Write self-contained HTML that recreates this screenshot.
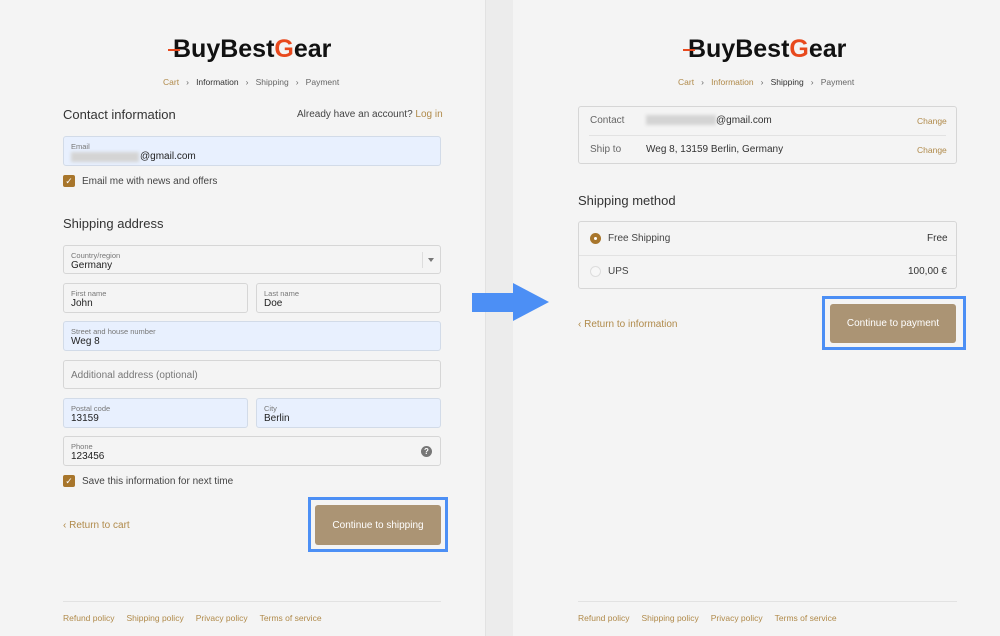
<!DOCTYPE html>
<html><head><meta charset="utf-8"><style>
*{margin:0;padding:0;box-sizing:border-box}
body{width:1000px;height:636px;position:relative;background:#f4f4f4;font-family:"Liberation Sans",sans-serif;color:#333;overflow:hidden}
.a{position:absolute}
.strip{left:485px;top:0;width:28px;height:636px;background:#ececec;border-left:1px solid #e2e2e2}
.logo{font-weight:bold;font-size:25px;letter-spacing:0;color:#111;white-space:nowrap}
.logo span{color:#e8491d}
.crumb{font-size:8.5px;color:#666;white-space:nowrap}
.crumb .g{color:#b08a4a}
.h{font-size:13px;color:#333}
.f{border:1px solid #d6d6d6;border-radius:3px;background:#f4f4f4}
.f.b{background:#e8f0fe;border-color:#d2dbe8}
.lab{position:absolute;left:7px;top:5px;font-size:7.5px;color:#777}
.val{position:absolute;left:7px;top:14px;font-size:10px;color:#222}
.ph{position:absolute;left:7px;top:9px;font-size:10px;color:#777}
.cb{width:12px;height:12px;background:#a8762c;border-radius:2px;color:#fff;font-size:9px;line-height:12px;text-align:center}
.t{font-size:10px;color:#444;white-space:nowrap}
.gold{color:#b08a4a}
.btn{background:#ab9474;border-radius:3px;color:#fff;font-size:10px;display:flex;align-items:center;justify-content:center}
.frame{border:3px solid #4c8ff5}
.foot{font-size:8.5px;color:#b08a4a;white-space:nowrap}
.foot b{font-weight:normal;margin-right:12px}
.line{height:1px;background:#e2e2e2}
.blur{background:#d4d4d4;filter:blur(1.5px)}
</style></head><body>
<div class="a strip"></div>

<!-- LEFT -->
<div class="a logo" style="left:173px;top:35px">BuyBest<span>G</span>ear</div>
<div class="a" style="left:168px;top:49px;width:12px;height:2px;background:#e8491d"></div>
<div class="a crumb" style="left:163px;top:77px"><span class="g">Cart</span> &nbsp;&nbsp;›&nbsp;&nbsp; <span style="color:#333">Information</span> &nbsp;&nbsp;›&nbsp;&nbsp; Shipping &nbsp;&nbsp;›&nbsp;&nbsp; Payment</div>

<div class="a h" style="left:63px;top:107px">Contact information</div>
<div class="a t" style="left:297px;top:109px">Already have an account? <span class="gold">Log in</span></div>
<div class="a f b" style="left:63px;top:136px;width:378px;height:30px"><div class="lab">Email</div><div class="a blur" style="left:7px;top:15px;width:68px;height:10px"></div><div class="val" style="left:76px">@gmail.com</div></div>
<div class="a cb" style="left:63px;top:175px">✓</div>
<div class="a t" style="left:82px;top:176px">Email me with news and offers</div>

<div class="a h" style="left:63px;top:216px">Shipping address</div>
<div class="a f" style="left:63px;top:245px;width:378px;height:29px"><div class="lab">Country/region</div><div class="val">Germany</div><div class="a" style="left:358px;top:6px;width:1px;height:16px;background:#ddd"></div><div class="a" style="left:364px;top:12px;width:0;height:0;border-left:3.5px solid transparent;border-right:3.5px solid transparent;border-top:4px solid #777"></div></div>
<div class="a f" style="left:63px;top:283px;width:185px;height:30px"><div class="lab">First name</div><div class="val">John</div></div>
<div class="a f" style="left:256px;top:283px;width:185px;height:30px"><div class="lab">Last name</div><div class="val">Doe</div></div>
<div class="a f b" style="left:63px;top:321px;width:378px;height:30px"><div class="lab">Street and house number</div><div class="val">Weg 8</div></div>
<div class="a f" style="left:63px;top:360px;width:378px;height:29px"><div class="ph">Additional address (optional)</div></div>
<div class="a f b" style="left:63px;top:398px;width:185px;height:30px"><div class="lab">Postal code</div><div class="val">13159</div></div>
<div class="a f b" style="left:256px;top:398px;width:185px;height:30px"><div class="lab">City</div><div class="val">Berlin</div></div>
<div class="a f" style="left:63px;top:436px;width:378px;height:30px"><div class="lab">Phone</div><div class="val">123456</div><div class="a" style="left:357px;top:9px;width:11px;height:11px;border-radius:50%;background:#777;color:#fff;font-size:8px;font-weight:bold;text-align:center;line-height:11px">?</div></div>
<div class="a cb" style="left:63px;top:475px">✓</div>
<div class="a t" style="left:82px;top:476px">Save this information for next time</div>

<div class="a t gold" style="left:63px;top:520px">‹ Return to cart</div>
<div class="a frame" style="left:308px;top:497px;width:140px;height:55px"></div>
<div class="a btn" style="left:315px;top:505px;width:126px;height:40px">Continue to shipping</div>

<div class="a line" style="left:63px;top:601px;width:378px"></div>
<div class="a foot" style="left:63px;top:613px"><b>Refund policy</b><b>Shipping policy</b><b>Privacy policy</b><b>Terms of service</b></div>

<!-- ARROW -->
<div class="a" style="left:472px;top:293px;width:42px;height:19px;background:#4c8ff5"></div>
<div class="a" style="left:513px;top:283px;width:0;height:0;border-top:19.5px solid transparent;border-bottom:19.5px solid transparent;border-left:36px solid #4c8ff5"></div>

<!-- RIGHT -->
<div class="a logo" style="left:688px;top:35px">BuyBest<span>G</span>ear</div>
<div class="a" style="left:683px;top:49px;width:12px;height:2px;background:#e8491d"></div>
<div class="a crumb" style="left:678px;top:77px"><span class="g">Cart</span> &nbsp;&nbsp;›&nbsp;&nbsp; <span class="g">Information</span> &nbsp;&nbsp;›&nbsp;&nbsp; <span style="color:#333">Shipping</span> &nbsp;&nbsp;›&nbsp;&nbsp; Payment</div>

<div class="a f" style="left:578px;top:106px;width:379px;height:58px"></div>
<div class="a line" style="left:589px;top:135px;width:357px"></div>
<div class="a t" style="left:590px;top:115px;color:#666">Contact</div>
<div class="a blur" style="left:646px;top:115px;width:70px;height:10px"></div>
<div class="a t" style="left:716px;top:115px;color:#333">@gmail.com</div>
<div class="a foot" style="left:917px;top:116px">Change</div>
<div class="a t" style="left:590px;top:144px;color:#666">Ship to</div>
<div class="a t" style="left:646px;top:144px;color:#333">Weg 8, 13159 Berlin, Germany</div>
<div class="a foot" style="left:917px;top:145px">Change</div>

<div class="a h" style="left:578px;top:193px">Shipping method</div>
<div class="a f" style="left:578px;top:221px;width:379px;height:68px"></div>
<div class="a line" style="left:579px;top:255px;width:377px"></div>
<div class="a" style="left:590px;top:233px;width:11px;height:11px;border-radius:50%;background:#a8762c"><div class="a" style="left:4px;top:4px;width:3px;height:3px;border-radius:50%;background:#fff"></div></div>
<div class="a t" style="left:608px;top:233px">Free Shipping</div>
<div class="a t" style="left:927px;top:233px;color:#333">Free</div>
<div class="a" style="left:590px;top:266px;width:11px;height:11px;border-radius:50%;border:1px solid #ddd;background:#f7f7f7"></div>
<div class="a t" style="left:608px;top:266px">UPS</div>
<div class="a t" style="left:908px;top:266px;color:#333">100,00 €</div>

<div class="a t gold" style="left:578px;top:319px">‹ Return to information</div>
<div class="a frame" style="left:822px;top:296px;width:144px;height:54px"></div>
<div class="a btn" style="left:830px;top:304px;width:126px;height:39px">Continue to payment</div>

<div class="a line" style="left:578px;top:601px;width:379px"></div>
<div class="a foot" style="left:578px;top:613px"><b>Refund policy</b><b>Shipping policy</b><b>Privacy policy</b><b>Terms of service</b></div>
</body></html>
